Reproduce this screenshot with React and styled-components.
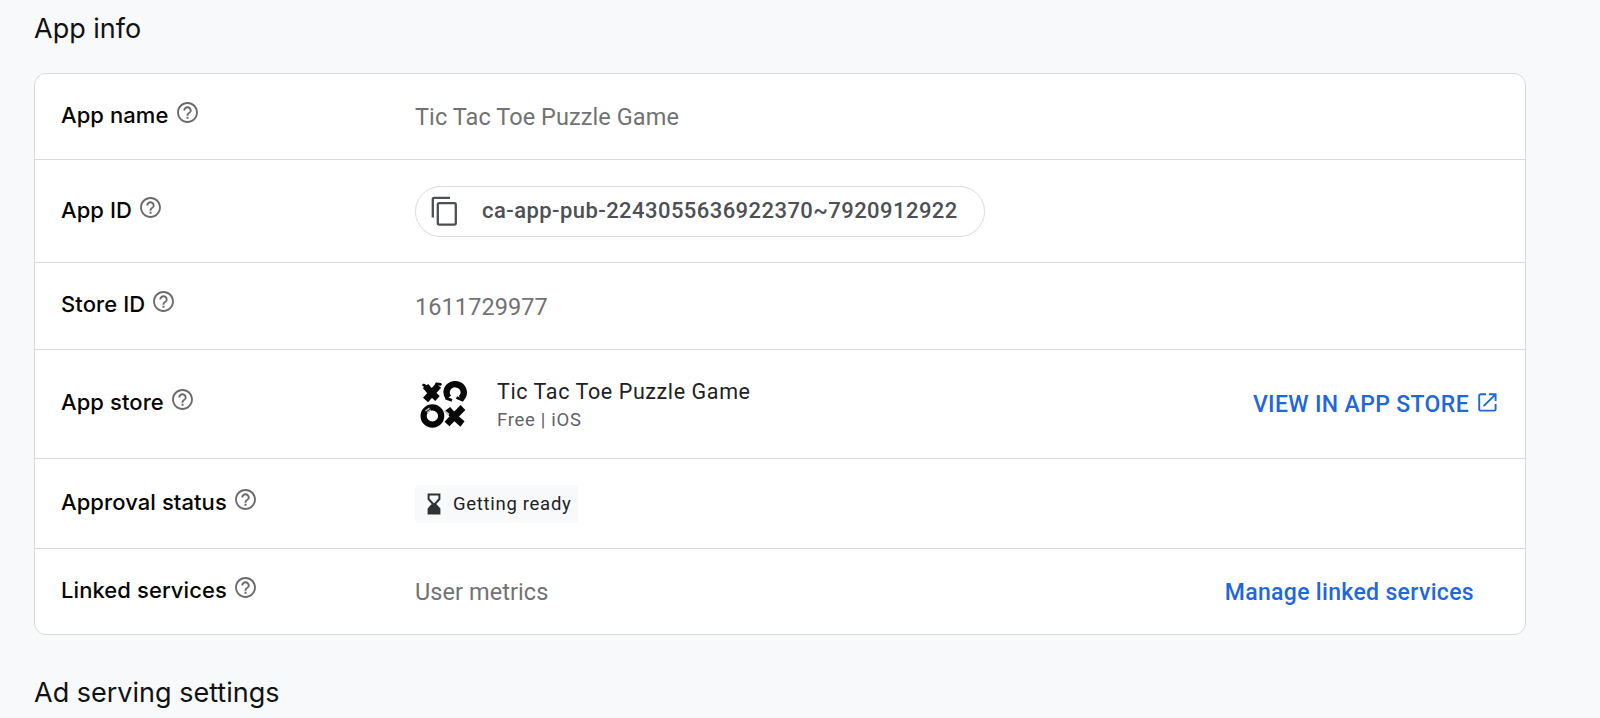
import React from "react";
import styled, { createGlobalStyle } from "styled-components";

const GlobalStyle = createGlobalStyle`
  * { box-sizing: border-box; }
  body {
    margin: 0;
    background: #f8f9fa;
    color: #0b0c0d;
    font-family: Roboto, sans-serif;
    overflow: hidden;
  }
  svg { display: block; flex: none; }
`;

const Page = styled.main`
  height: 718px;
  padding: 13px 74px 0 34px;
  overflow: hidden;
`;

const Heading = styled.h2`
  margin: 0;
  font: 400 27px/32px Inter, sans-serif;
  color: #111214;
`;

const Card = styled.section`
  margin: 28px 0 42px;
  border: 1px solid #d8dadc;
  border-radius: 12px;
  background: #fff;
`;

const Row = styled.div`
  display: grid;
  grid-template-columns: 354px 1fr auto;
  align-items: center;
  height: ${(p) => p.$height}px;
  padding: 0 28px 0 26px;
  border-bottom: 1px solid #d8dadc;
  &:last-child { border-bottom: 0; }
`;

const Label = styled.div`
  display: flex;
  align-items: center;
  gap: 6px;
  padding-bottom: ${(p) => p.$lift}px;
  font: 450 22px/26px Inter, sans-serif;
  letter-spacing: 0.08px;
  color: #060606;
`;

const HelpIcon = styled.svg`
  width: 25px;
  height: 25px;
  margin-bottom: 5px;
  fill: #6b6b6b;
`;

const Value = styled.span`
  padding-top: ${(p) => p.$drop || 1}px;
  font-size: 23.5px;
  line-height: 28px;
  letter-spacing: 0.08px;
  color: #717273;
`;

const IdPill = styled.button`
  display: flex;
  align-items: center;
  justify-self: start;
  gap: 25px;
  width: 570px;
  height: 51px;
  padding: 0 0 1px 15px;
  border: 1px solid #dadce0;
  border-radius: 26px;
  background: #fff;
  color: #4c5055;
  font: 500 22px/26px Roboto, sans-serif;
  letter-spacing: 0.44px;
`;

const StoreApp = styled.div`
  display: flex;
  align-items: center;
  gap: 30px;
  padding-left: 5px;
`;

const StoreText = styled.div`
  display: flex;
  flex-direction: column;
  padding-top: 2px;
`;

const StoreName = styled.span`
  font-size: 21.5px;
  line-height: 30px;
  letter-spacing: 0.6px;
  color: #202124;
`;

const StoreMeta = styled.span`
  font-size: 18.5px;
  line-height: 27px;
  letter-spacing: 0.7px;
  color: #5f6368;
`;

const StatusChip = styled.div`
  display: flex;
  align-items: center;
  justify-self: start;
  gap: 12px;
  height: 38px;
  padding: 0 7px 0 12px;
  border-radius: 3px;
  background: #f8f9fa;
  color: #202124;
  font-size: 18.5px;
  letter-spacing: 0.7px;
`;

const StoreLink = styled.a`
  display: flex;
  align-items: center;
  gap: 9px;
  padding-top: 1px;
  font-weight: 500;
  font-size: 23px;
  line-height: 28px;
  letter-spacing: 0.35px;
  color: #1f67dc;
`;

const OpenMark = styled.span`
  padding-bottom: 5px;
`;

const ManageLink = styled.a`
  padding: 3px 23px 0 0;
  font-weight: 500;
  font-size: 23px;
  line-height: 28px;
  letter-spacing: 0.33px;
  color: #1f67dc;
`;

const Help = () => (
  <HelpIcon viewBox="0 0 24 24">
    <path d="M11 18h2v-2h-2v2zm1-16C6.48 2 2 6.48 2 12s4.48 10 10 10 10-4.48 10-10S17.52 2 12 2zm0 18.2c-4.52 0-8.2-3.68-8.2-8.2s3.68-8.2 8.2-8.2 8.2 3.68 8.2 8.2-3.68 8.2-8.2 8.2zM12 6c-2.21 0-4 1.79-4 4h1.8c0-1.2 1-2.2 2.2-2.2s2.2 1 2.2 2.2c0 2-3.1 1.75-3.1 5h1.8c0-2.25 3.1-2.5 3.1-5 0-2.21-1.79-4-4-4z" />
  </HelpIcon>
);

const CopyIcon = () => (
  <svg width="26" height="30" viewBox="0 0 26 30" fill="none" stroke="#4c5055" strokeWidth="2.3">
    <path d="M1.8 21.5V3.3Q1.8 1.8 3.3 1.8H19" />
    <rect x="6.8" y="7.2" width="18" height="21.4" rx="1.5" />
  </svg>
);

const AppLogo = () => (
  <svg width="47" height="47" viewBox="0 0 47 47" fill="none" stroke="#080808">
    <path d="M5.5 5Q10 11 17.5 17.5M18.5 4.5Q12 12 5.5 19" strokeWidth="6.8" />
    <path d="M3.5 4L8 6.5M16.5 2.8L20.5 3.4" strokeWidth="2.6" strokeLinecap="round" />
    <path d="M28.6 16.6A8.6 8.2 0 1 1 40.8 17.6" strokeWidth="6.4" />
    <path d="M25.5 17L32 19.4M36.5 16.4L43.5 19.6" strokeWidth="2.8" />
    <ellipse cx="12.4" cy="35" rx="8.8" ry="8.6" strokeWidth="6.2" />
    <path d="M5.4 30L9.5 27.2M7 31.6L11 29" stroke="#b9b9b9" strokeWidth="1.5" />
    <path d="M27.5 28Q34 36.5 42.5 43M43 26.5Q36 33.5 27 43" strokeWidth="6.8" />
    <path d="M24.5 30L29 33.5" stroke="#c8c8c8" strokeWidth="1.6" />
  </svg>
);

const Hourglass = () => (
  <svg width="14" height="22" viewBox="0 0 14 22">
    <path d="M1.6 1.6H12.4V6L7.9 11L12.4 16V20.4H1.6V16L6.1 11L1.6 6Z" fill="none" stroke="#303336" strokeWidth="2" />
    <path d="M7 10.5L12.4 15.5V20.4H1.6V15.5Z" fill="#303336" />
  </svg>
);

const OpenIcon = () => (
  <svg width="19" height="19" viewBox="0 0 19 19" fill="none" stroke="#1f67dc" strokeWidth="1.9">
    <path d="M8 1.2H2.6Q1.2 1.2 1.2 2.6V16.2Q1.2 17.6 2.6 17.6H16.2Q17.6 17.6 17.6 16.2V11" />
    <path d="M11 1.2H17.6V8M17.2 1.6L5.6 13.2" />
  </svg>
);

const Field = ({ label, height, lift = 3, children }) => (
  <Row $height={height}>
    <Label $lift={lift}>
      {label}
      <Help />
    </Label>
    {children}
  </Row>
);

export default function App() {
  return (
    <Page>
      <GlobalStyle />
      <Heading>App info</Heading>
      <Card>
        <Field label="App name" height={86}>
          <Value>Tic Tac Toe Puzzle Game</Value>
        </Field>
        <Field label="App ID" height={103}>
          <IdPill>
            <CopyIcon />
            ca-app-pub-2243055636922370~7920912922
          </IdPill>
        </Field>
        <Field label="Store ID" height={87} lift={4}>
          <Value $drop={2}>1611729977</Value>
        </Field>
        <Field label="App store" height={109} lift={4}>
          <StoreApp>
            <AppLogo />
            <StoreText>
              <StoreName>Tic Tac Toe Puzzle Game</StoreName>
              <StoreMeta>Free | iOS</StoreMeta>
            </StoreText>
          </StoreApp>
          <StoreLink>
            VIEW IN APP STORE
            <OpenMark>
              <OpenIcon />
            </OpenMark>
          </StoreLink>
        </Field>
        <Field label="Approval status" height={90} lift={4}>
          <StatusChip>
            <Hourglass />
            Getting ready
          </StatusChip>
        </Field>
        <Field label="Linked services" height={85}>
          <Value>User metrics</Value>
          <ManageLink>Manage linked services</ManageLink>
        </Field>
      </Card>
      <Heading>Ad serving settings</Heading>
    </Page>
  );
}
